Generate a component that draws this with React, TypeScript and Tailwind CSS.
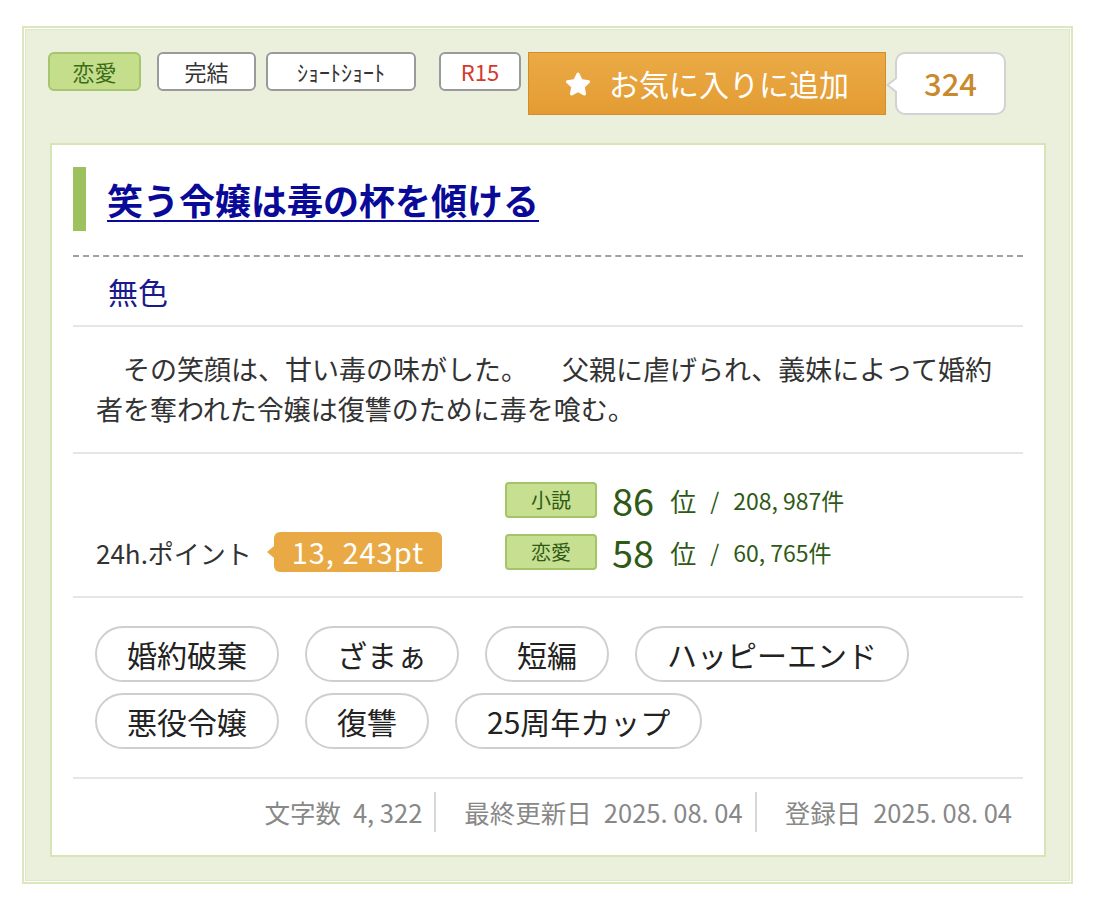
import { FaStar } from 'react-icons/fa'

const keywords = [
  ['婚約破棄', 'ざまぁ', '短編', 'ハッピーエンド'],
  ['悪役令嬢', '復讐', '25周年カップ'],
]

const Tag = ({ label, className }: { label: string; className: string }) => (
  <span className={`flex h-[39px] items-center justify-center rounded-[6px] border-2 ${className}`}>{label}</span>
)

const RankRow = ({ genre, rank, total }: { genre: string; rank: string; total: string }) => (
  <div className="flex h-[40px] items-center text-[#2f5a16]">
    <span className="flex h-[36px] w-[92px] items-center justify-center rounded-[4px] border-2 border-[#a3c568] bg-[#c6df90] text-[20px] text-[#2f5a16]">
      {genre}
    </span>
    <span className="ml-[15px] text-[38px] leading-none">{rank}</span>
    <span className="ml-[16px] text-[26px]">位</span>
    <span className="ml-[14px] text-[23px]">/</span>
    <span className="ml-[14px] text-[23px]">{total}</span>
  </div>
)

export default function App() {
  return (
    <div className="h-[907px] w-[1096px] bg-white pl-[22px] pt-[26px] font-['Noto_Sans_CJK_JP',sans-serif] text-[#333]">
      <div className="h-[858px] w-[1051px] border-2 border-[#dce6bf] bg-[#eaf0db] pl-[24px] pt-[24px] shadow-[inset_0_0_0_1px_#ffffff,inset_0_0_0_2px_#dfe8c6]">
        {/* top labels */}
        <div className="flex items-start">
          <Tag label="恋愛" className="w-[93px] border-[#a5c66c] bg-[#c4de8c] text-[22px] text-[#3b6b16]" />
          <Tag label="完結" className="ml-[16px] w-[99px] border-[#9a9a9a] bg-white text-[22px] text-[#333]" />
          <Tag label="ｼｮｰﾄｼｮｰﾄ" className="ml-[10px] w-[150px] border-[#9a9a9a] bg-white text-[22px] text-[#333]" />
          <Tag label="R15" className="ml-[23px] w-[82px] border-[#9a9a9a] bg-white text-[22px] text-[#d33a2c]" />
          <button className="ml-[7px] flex h-[63px] w-[358px] items-center justify-center border border-[#d38b2c] bg-gradient-to-b from-[#ebaa45] to-[#e39c33] text-[30px] text-white">
            <FaStar className="mr-[18px] h-[26px] w-[26px]" />
            お気に入りに追加
          </button>
          <div className="relative ml-[9px] flex h-[63px] w-[111px] items-center justify-center rounded-[10px] border-2 border-[#d2d2d2] bg-white text-[31px] font-medium text-[#c98a2e]">
            <span className="absolute left-[-11px] top-[23px] h-0 w-0 border-y-[8px] border-r-[10px] border-y-transparent border-r-[#d2d2d2]" />
            <span className="absolute left-[-8px] top-[24px] h-0 w-0 border-y-[7px] border-r-[9px] border-y-transparent border-r-white" />
            324
          </div>
        </div>

        {/* card */}
        <div className="ml-[2px] mt-[28px] h-[714px] w-[996px] border-2 border-[#d7e4b5] bg-white px-[21px]">
          <div className="flex items-center border-b-2 border-dashed border-[#a0a0a0] pb-[24px] pt-[22px]">
            <span className="h-[64px] w-[13px] bg-[#9dc15c]" />
            <a href="#" className="ml-[21px] text-[36px] font-bold text-[#0a0a99] underline decoration-2 underline-offset-[5px]">
              笑う令嬢は毒の杯を傾ける
            </a>
          </div>

          <div className="flex h-[70px] items-center border-b-2 border-[#e6e6e6] pl-[35px] text-[30px] text-[#1a1a8c]">
            無色
          </div>

          <p className="border-b-2 border-[#e6e6e6] pb-[23px] pl-[23px] pt-[22px] text-[27px] leading-[40px] text-[#333]">
            {'\u3000その笑顔は、甘い毒の味がした。'}
            <span className="inline-block w-[34px]" />
            父親に虐げられ、義妹によって婚約
            <br />
            者を奪われた令嬢は復讐のために毒を喰む。
          </p>

          <div className="flex items-end border-b-2 border-[#e6e6e6] pb-[24px] pt-[26px]">
            <div className="flex h-[40px] w-[432px] items-center pl-[23px]">
              <span className="text-[26px]">24h.ポイント</span>
              <span className="relative ml-[22px] flex h-[40px] w-[168px] items-center justify-center rounded-[6px] bg-[#e9aa46] text-[29px] tracking-[1px] text-white">
                <span className="absolute left-[-7px] top-[14px] h-0 w-0 border-y-[6px] border-r-[7px] border-y-transparent border-r-[#e9aa46]" />
                13, 243pt
              </span>
            </div>
            <div className="flex flex-col gap-[12px]">
              <RankRow genre="小説" rank="86" total="208, 987件" />
              <RankRow genre="恋愛" rank="58" total="60, 765件" />
            </div>
          </div>

          <div className="flex flex-col gap-[11px] border-b-2 border-[#e6e6e6] pb-[28px] pl-[22px] pt-[28px]">
            {keywords.map((row, i) => (
              <div key={i} className="flex gap-[26px]">
                {row.map((k) => (
                  <span key={k} className="flex h-[56px] items-center rounded-full border-2 border-[#cfcfcf] px-[30px] text-[30px] text-[#222]">
                    {k}
                  </span>
                ))}
              </div>
            ))}
          </div>

          <div className="flex items-start justify-end pr-[11px] pt-[13px] text-[25.5px] text-[#888]">
            <span className="border-r-2 border-[#d8d8d8] pr-[12px] leading-[40px]">
              文字数<span className="ml-[12px]">4, 322</span>
            </span>
            <span className="border-r-2 border-[#d8d8d8] pl-[28px] pr-[12px] leading-[40px]">
              最終更新日<span className="ml-[12px]">2025. 08. 04</span>
            </span>
            <span className="pl-[28px] leading-[40px]">
              登録日<span className="ml-[12px]">2025. 08. 04</span>
            </span>
          </div>
        </div>
      </div>
    </div>
  )
}
